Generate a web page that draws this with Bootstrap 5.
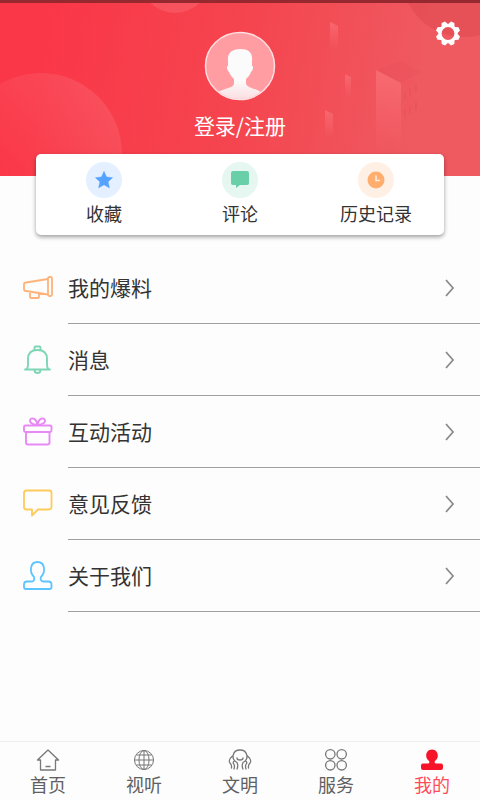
<!DOCTYPE html>
<html lang="zh-CN">
<head>
<meta charset="utf-8">
<meta name="viewport" content="width=device-width, initial-scale=1">
<title>我的</title>
<link href="https://cdn.jsdelivr.net/npm/bootstrap@5.3.0/dist/css/bootstrap.min.css" rel="stylesheet">
<style>
body{font-family:"Noto Sans CJK SC",sans-serif;color:#333;background:#fdfdfd}
svg{display:block;flex:none}
.hero{background:linear-gradient(100deg,#fa3748 10%,#f5454f 50%,#ef5960 85%);border-top:3px solid #95292f;height:176px}
.hero-art{z-index:0}
.login-link{font-size:21px;line-height:28px;color:#fff}
.avatar{margin-top:28px;margin-bottom:10px}
.settings{top:15px;right:16px}
.quick{margin:-22px 36px 0;border-radius:5px;box-shadow:0 2px 4px rgba(0,0,0,.38);height:81px;padding-top:8px}
.quick a{font-size:18px;line-height:26px;color:#333}
.bubble{width:36px;height:36px;margin-bottom:2px}
.menu{padding-top:17px}
.menu a{color:#333;font-size:21px;line-height:28px;padding-left:22px}
.menu-line{height:72px;margin-left:14px;padding-right:24px;border-bottom:1px solid #a0a0a0}
.menu-text{padding-bottom:2px}
.menu-icon{width:32px}
.tabs{border-top:1px solid #eee;height:59px;padding-top:6px}
.tabs a{font-size:18px;line-height:24px;color:#606060}
.tabs a.current{color:#ff4c5a}
</style>
</head>
<body>
<div class="d-flex flex-column min-vh-100">
<header class="hero position-relative">
<svg class="hero-art position-absolute top-0 start-0 w-100 h-100" viewBox="0 3 480 173" preserveAspectRatio="none" aria-hidden="true">
<defs>
<linearGradient id="orb" x1="0" y1="1" x2="1" y2="0"><stop offset=".3" stop-color="#fff" stop-opacity="0"/><stop offset="1" stop-color="#fff" stop-opacity=".12"/></linearGradient>
<linearGradient id="tower" x1="0" y1="0" x2="0" y2="1"><stop offset="0" stop-color="#ff8086" stop-opacity=".5"/><stop offset="1" stop-color="#ff7880" stop-opacity="0"/></linearGradient>
</defs>
<circle cx="41" cy="154" r="81" fill="url(#orb)"/>
<circle cx="175" cy="-22" r="35" fill="#fff" opacity=".1"/>
<circle cx="464" cy="-26" r="63" fill="#d83e49" opacity=".35"/>
<g fill="url(#tower)"><path d="M376 70l25 13v68h-25z"/><path d="M330 22l8 4v24h-8z"/><path d="M345 74l6 3v21h-6z"/><path d="M325 110l8 4v24h-8z"/><path d="M269 114l8 4v30h-8z" opacity=".25"/></g>
<path d="M376 70l24-9 21 11-20 11z" fill="#d94852" opacity=".13"/>
<path d="M405 92v7m5-11v8m6-12v8m-11 18v8m5-12v8m6-12v8" stroke="#dd4954" opacity=".45"/>
</svg>
<div class="position-relative d-flex flex-column align-items-center">
<svg class="avatar" width="72" height="70" viewBox="0 0 72 70" aria-hidden="true"><defs><clipPath id="face"><ellipse cx="36" cy="35" rx="34" ry="33"/></clipPath><linearGradient id="bust" x1="0" y1="0" x2="0" y2="1"><stop offset=".6" stop-color="#fbfbfb"/><stop offset="1" stop-color="#fbd9dc"/></linearGradient></defs><ellipse cx="36" cy="35" rx="34.5" ry="33.5" fill="#ff9da3" stroke="#ffdfe1" stroke-width="1.5"/><path clip-path="url(#face)" fill="url(#bust)" d="M24 30c-1-8 4-12 12-12 9 0 13 4 12 12v5c2 0 1 4-1 6-1 3-3 5-5 7v5c2 4 8 4 15 8v10H14V61c7-4 15-4 16-8v-5c-2-2-4-4-5-7-2-2-3-6-1-6z"/></svg>
<a href="#" class="login-link text-decoration-none">登录/注册</a>
</div>
<button type="button" class="settings btn p-0 border-0 position-absolute" aria-label="设置"><svg width="32" height="32" viewBox="0 0 32 32"><g transform="translate(16 15.5)"><circle r="8" fill="none" stroke="#fff" stroke-width="3.2"/><g fill="#fff"><path id="tooth" d="M-3.600-8.500l1.800-3.700h3.600l1.800 3.700z" transform="rotate(22.5)"/><use href="#tooth" transform="rotate(45)"/><use href="#tooth" transform="rotate(90)"/><use href="#tooth" transform="rotate(135)"/><use href="#tooth" transform="rotate(180)"/><use href="#tooth" transform="rotate(225)"/><use href="#tooth" transform="rotate(270)"/><use href="#tooth" transform="rotate(315)"/></g></g></svg></button>
</header>
<main class="flex-grow-1">
<nav class="quick bg-white position-relative" aria-label="快捷入口"><div class="row g-0 text-center">
<a href="#" class="col text-decoration-none"><svg class="bubble mx-auto" viewBox="0 0 36 36"><circle cx="18" cy="18" r="18" fill="#e4f0ff"/><path d="M18 9.500l2.500 5.600 6 .6-4.500 4.100 1.300 6-5.300-3.100-5.300 3.100 1.300-6-4.500-4.100 6-.6z" fill="#55a2ff" stroke="#55a2ff" stroke-width=".6" stroke-linejoin="round"/></svg>收藏</a>
<a href="#" class="col text-decoration-none"><svg class="bubble mx-auto" viewBox="0 0 36 36"><circle cx="18" cy="18" r="18" fill="#e5f7f0"/><path d="M11 9h14q2 0 2 2v10q0 2-2 2h-7l-4 3v-3h-3q-2 0-2-2V11q0-2 2-2z" fill="#68cfa9"/></svg>评论</a>
<a href="#" class="col text-decoration-none"><svg class="bubble mx-auto" viewBox="0 0 36 36"><circle cx="18" cy="18" r="18" fill="#fff0e6"/><circle cx="18" cy="18" r="8.5" fill="#ffae6d"/><path d="M18 13.500V18.500h4" fill="none" stroke="#fff0e6" stroke-width="1.5"/></svg>历史记录</a>
</div></nav>
<nav class="menu" aria-label="菜单">
<a href="#" class="d-flex align-items-center text-decoration-none"><svg class="menu-icon" height="32" viewBox="0 0 32 32" fill="none" stroke="#ffb27a" stroke-width="1.8" stroke-linejoin="round"><path d="M26 7L4 10.500q-2 0-2 2V17q0 2 2 2l22 3.500M8 20v5q0 1 1 1h7q1 0 1-1v-4"/><rect x="26" y="5" width="4" height="19" rx="1.500"/></svg><span class="menu-line flex-grow-1 d-flex align-items-center justify-content-between"><span class="menu-text">我的爆料</span><svg width="14" height="20" viewBox="0 0 14 20" fill="none" stroke="#888" stroke-width="1.7"><path d="M4 2l7 8-7 8"/></svg></span></a>
<a href="#" class="d-flex align-items-center text-decoration-none"><svg class="menu-icon" height="32" viewBox="0 0 32 32" fill="none" stroke="#7fd6b5" stroke-width="1.9" stroke-linecap="round" stroke-linejoin="round"><path d="M3 25.500h25M4.500 25q1.500-1 1.500-4v-6q0-9 9.500-9t9.500 9v6q0 3 1.500 4M12.500 6V3.500q0-1 1-1h4q1 0 1 1V6M12.500 26q0 3 3 3t3-3"/></svg><span class="menu-line flex-grow-1 d-flex align-items-center justify-content-between"><span class="menu-text">消息</span><svg width="14" height="20" viewBox="0 0 14 20" fill="none" stroke="#888" stroke-width="1.7"><path d="M4 2l7 8-7 8"/></svg></span></a>
<a href="#" class="d-flex align-items-center text-decoration-none"><svg class="menu-icon" height="32" viewBox="0 0 32 32" fill="none" stroke="#e889f5" stroke-width="1.9" stroke-linejoin="round"><rect x="2" y="9.500" width="27.500" height="6.500" rx="1.500"/><path d="M4 16v10.500q0 2 2 2h19.500q2 0 2-2V16M15.500 9q-4 0-7-2.500C7 4 9 2 11 2.500q3.500 .5 4.500 6.500zq1-6 4.500-6.500c2-.5 4 1.500 2.500 4Q19.500 9 15.500 9z"/></svg><span class="menu-line flex-grow-1 d-flex align-items-center justify-content-between"><span class="menu-text">互动活动</span><svg width="14" height="20" viewBox="0 0 14 20" fill="none" stroke="#888" stroke-width="1.7"><path d="M4 2l7 8-7 8"/></svg></span></a>
<a href="#" class="d-flex align-items-center text-decoration-none"><svg class="menu-icon" height="32" viewBox="0 0 32 32" fill="none" stroke="#ffca5c" stroke-width="1.8" stroke-linejoin="round"><path d="M4.500 2.500h22.500q2.500 0 2.500 2.500v14q0 2.500-2.500 2.500H16l-6 6v-6H4.500q-2.500 0-2.500-2.500V5q0-2.500 2.500-2.500z"/></svg><span class="menu-line flex-grow-1 d-flex align-items-center justify-content-between"><span class="menu-text">意见反馈</span><svg width="14" height="20" viewBox="0 0 14 20" fill="none" stroke="#888" stroke-width="1.7"><path d="M4 2l7 8-7 8"/></svg></span></a>
<a href="#" class="d-flex align-items-center text-decoration-none"><svg class="menu-icon" height="32" viewBox="0 0 32 32" fill="none" stroke="#5cc4ff" stroke-width="1.8" stroke-linejoin="round"><path d="M12 17c-5-5-4-15 3.500-15S24 12 19 17c-1 2 0 4 2 4.500h5.500q3 0 3 3V27q0 2-2 2H4q-2 0-2-2v-2.500q0-3 3-3h5q3-.5 2-4.500z"/></svg><span class="menu-line flex-grow-1 d-flex align-items-center justify-content-between"><span class="menu-text">关于我们</span><svg width="14" height="20" viewBox="0 0 14 20" fill="none" stroke="#888" stroke-width="1.7"><path d="M4 2l7 8-7 8"/></svg></span></a>
</nav>
</main>
<nav class="tabs sticky-bottom row g-0 text-center" aria-label="主导航">
<a href="#" class="col text-decoration-none"><svg class="mx-auto" width="24" height="24" viewBox="0 0 24 24" fill="none" stroke="#777" stroke-width="1.3" stroke-linejoin="round"><path d="M4.500 12H1.500L12 2 22.500 12h-3v10h-15zM9.500 18.500h5"/></svg>首页</a>
<a href="#" class="col text-decoration-none"><svg class="mx-auto" width="24" height="24" viewBox="0 0 24 24" fill="none" stroke="#777"><circle cx="12" cy="12" r="9.500"/><ellipse cx="12" cy="12" rx="5" ry="9.500"/><path d="M12 2.500v19M2.500 12h19M4.500 7h15M4.500 17h15"/></svg>视听</a>
<a href="#" class="col text-decoration-none"><svg class="mx-auto" width="24" height="24" viewBox="0 0 24 24" fill="none" stroke="#777" stroke-width="1.300" stroke-linecap="round"><path d="M9 14.500C2.500 11 4.500 2 12 2s9.500 9 3 12.500M9 10q0 2 3 2t3-2M4.500 8C2 10 .5 13 2 15q2 2 1.500 5M6.500 13c-2 1-1.500 2-.5 3.500s.500 3 0 4.500M9 14.500q1.500 3.500 0 6.500M19.500 8c2.500 2 4 5 2.500 7q-2 2-1.500 5M17.500 13c2 1 1.500 2 .5 3.500s-.5 3 0 4.500M15 14.500q-1.500 3.500 0 6.500"/></svg>文明</a>
<a href="#" class="col text-decoration-none"><svg class="mx-auto" width="24" height="24" viewBox="0 0 24 24" fill="none" stroke="#777" stroke-width="1.300"><circle cx="6.300" cy="6.300" r="4.700"/><circle cx="17.700" cy="6.300" r="4.700"/><circle cx="6.300" cy="17.300" r="4.700"/><circle cx="17.700" cy="17.300" r="4.700"/></svg>服务</a>
<a href="#" class="col text-decoration-none current" aria-current="page"><svg class="mx-auto" width="24" height="24" viewBox="0 0 24 24" fill="#f71428"><path d="M9 13C4 9 6 1.500 12 1.500S20 9 15 13c-1 1.500 0 2.500 1.500 2.500H21q2 0 2 2V20q0 2-2 2H3q-2 0-2-2v-2.500q0-2 2-2h4.500C9 15.500 10 14.500 9 13z"/></svg>我的</a>
</nav>
</div>
<script src="https://cdn.jsdelivr.net/npm/bootstrap@5.3.0/dist/js/bootstrap.bundle.min.js"></script>
</body>
</html>
